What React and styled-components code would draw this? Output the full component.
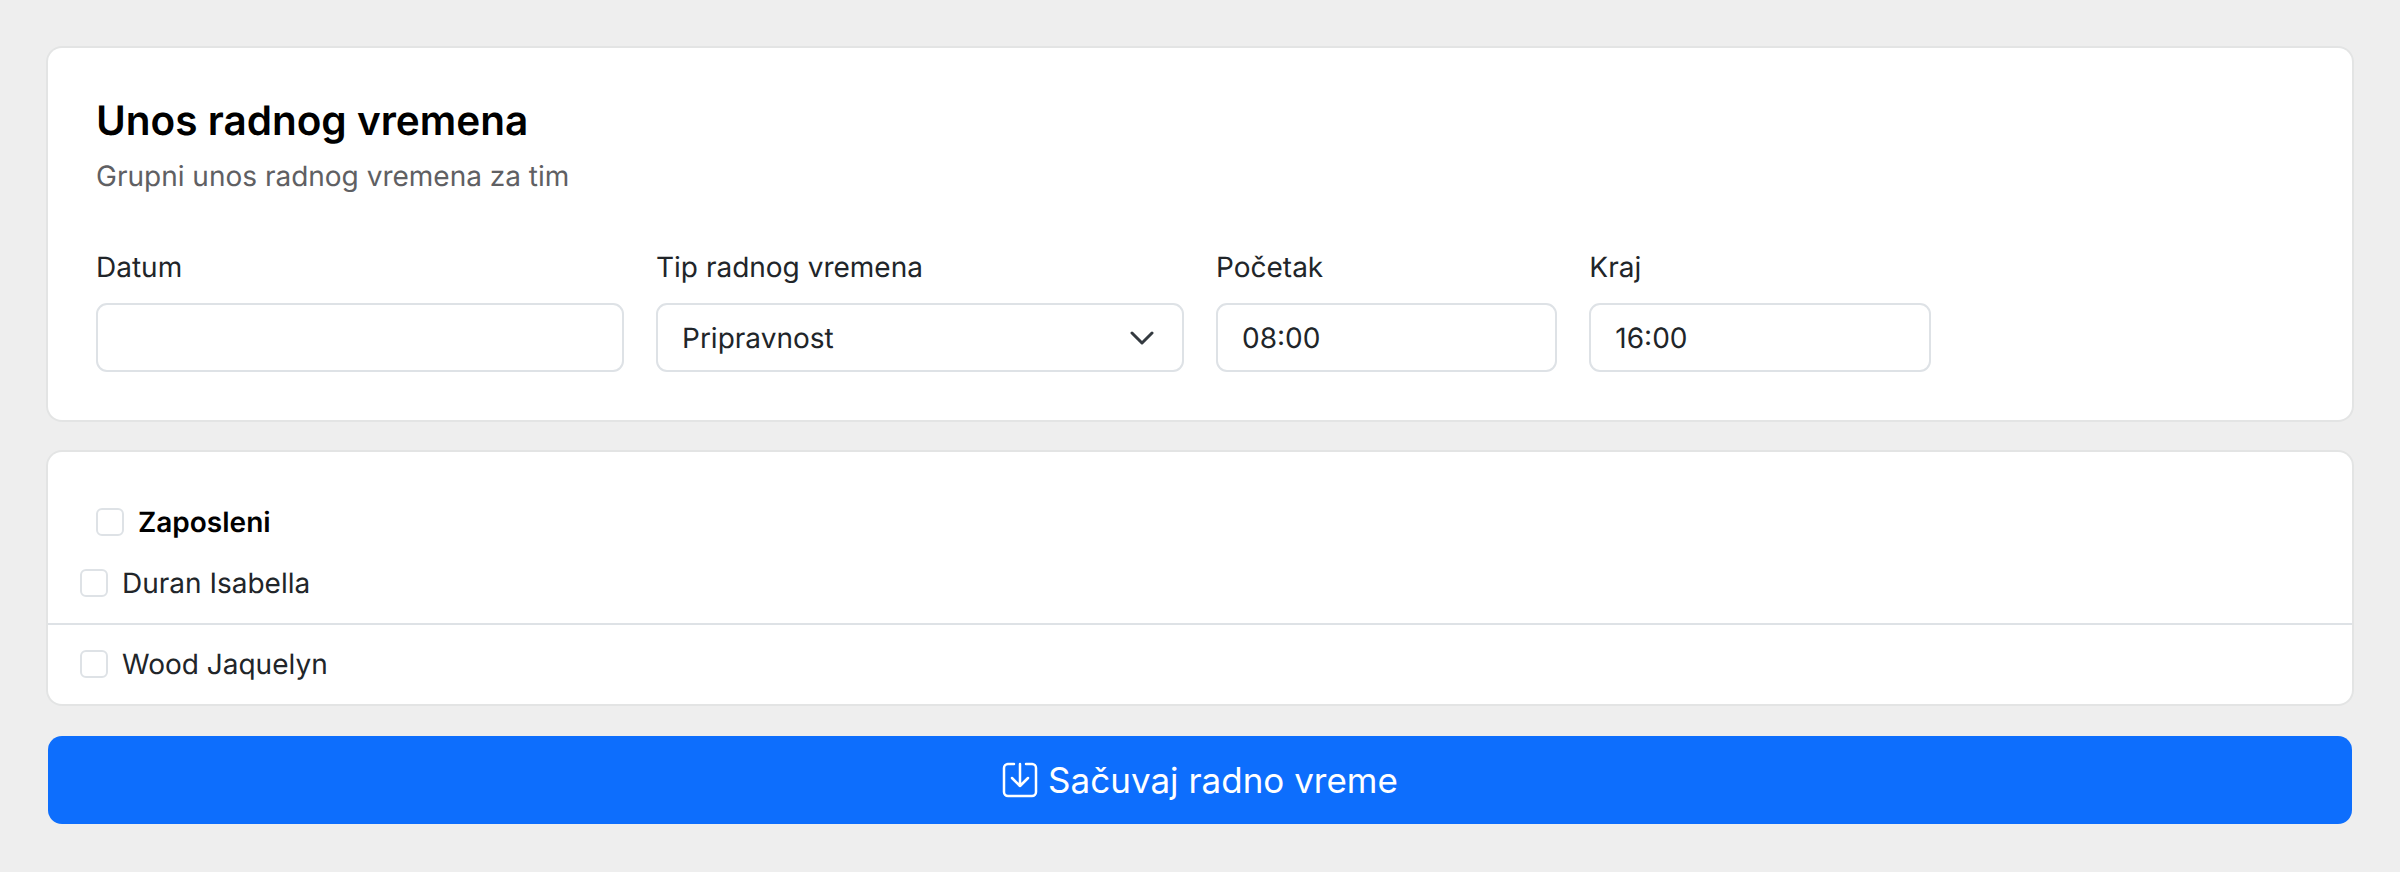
import React from "react";
import styled, { createGlobalStyle } from "styled-components";

const GlobalStyle = createGlobalStyle`
  html, body {
    margin: 0;
    background: #eeeeee;
  }
  body {
    font-family: Inter, "Liberation Sans", sans-serif;
    color: #212529;
    text-rendering: geometricPrecision;
  }
`;

const Page = styled.main`
  display: flex;
  flex-direction: column;
  gap: 32px;
  padding: 48px;
`;

const Card = styled.section`
  background: #fff;
  border-radius: 14px;
  box-shadow: 0 0 0 2px #e3e4e4;
`;

const HeaderCard = styled(Card)`
  padding: 48px;
`;

const Title = styled.h1`
  margin: 0;
  font-size: 40.5px;
  font-weight: 600;
  line-height: 50px;
  color: #000;
`;

const Subtitle = styled.p`
  margin: 12px 0 0;
  font-size: 28px;
  line-height: 36px;
  color: #5f6063;
`;

const FormGrid = styled.div`
  display: grid;
  grid-template-columns: repeat(12, 1fr);
  column-gap: 32px;
  margin-top: 55px;
`;

const Field = styled.label`
  grid-column: span ${({ $span }) => $span};
  display: flex;
  flex-direction: column;
  gap: 18px;
`;

const LabelText = styled.span`
  font-size: 28px;
  line-height: 36px;
`;

const Control = styled.div`
  box-sizing: border-box;
  display: flex;
  align-items: center;
  justify-content: space-between;
  height: 69px;
  padding: 0 24px;
  border: 2px solid #dee2e6;
  border-radius: 11px;
  background: #fff;
  font-size: 28px;
`;

const Chevron = styled.svg`
  width: 24px;
  height: 24px;
  margin-right: 4px;
`;

const ListCard = styled(Card)`
  padding-bottom: 1px;
  overflow: hidden;
`;

const ListHeader = styled.div`
  display: flex;
  align-items: center;
  gap: 14px;
  padding: 56px 0 7px 48px;
  font-size: 28px;
  line-height: 28px;
  font-weight: 600;
  color: #000;
`;

const Row = styled.div`
  box-sizing: border-box;
  display: flex;
  align-items: center;
  gap: 14px;
  height: 80px;
  padding-left: 32px;
  font-size: 28px;
  border-top: ${({ $divided }) => ($divided ? "2px solid #dee2e6" : "none")};
`;

const Box = styled.span`
  box-sizing: border-box;
  flex: none;
  width: 28px;
  height: 28px;
  border: 2px solid #dee2e6;
  border-radius: 6px;
  background: #fff;
`;

const SaveButton = styled.button`
  display: flex;
  align-items: center;
  justify-content: center;
  gap: 10px;
  height: 88px;
  border: 0;
  border-radius: 14px;
  background: #0d6efd;
  color: #fff;
  font-family: inherit;
  font-size: 35px;
`;

const SaveIcon = styled.svg`
  width: 36px;
  height: 36px;
`;

export default function App() {
  return (
    <>
      <GlobalStyle />
      <Page>
        <HeaderCard>
          <Title>Unos radnog vremena</Title>
          <Subtitle>Grupni unos radnog vremena za tim</Subtitle>
          <FormGrid>
            <Field $span={3}>
              <LabelText>Datum</LabelText>
              <Control />
            </Field>
            <Field $span={3}>
              <LabelText>Tip radnog vremena</LabelText>
              <Control>
                Pripravnost
                <Chevron viewBox="0 0 24 24" fill="none" stroke="#343a40" strokeWidth="3" strokeLinecap="round" strokeLinejoin="round">
                  <path d="m2 7 10 10 10-10" />
                </Chevron>
              </Control>
            </Field>
            <Field $span={2}>
              <LabelText>Početak</LabelText>
              <Control>08:00</Control>
            </Field>
            <Field $span={2}>
              <LabelText>Kraj</LabelText>
              <Control>16:00</Control>
            </Field>
          </FormGrid>
        </HeaderCard>
        <ListCard>
          <ListHeader>
            <Box />
            Zaposleni
          </ListHeader>
          <Row>
            <Box />
            Duran Isabella
          </Row>
          <Row $divided>
            <Box />
            Wood Jaquelyn
          </Row>
        </ListCard>
        <SaveButton type="button">
          <SaveIcon viewBox="0 0 36 36" fill="none" stroke="#fff" strokeWidth="2.5" strokeLinecap="round" strokeLinejoin="round">
            <path d="M12 2H6a4 4 0 0 0-4 4v24a4 4 0 0 0 4 4h24a4 4 0 0 0 4-4V6a4 4 0 0 0-4-4h-6" />
            <path d="M18 2v22M10 16l8 8 8-8" />
          </SaveIcon>
          Sačuvaj radno vreme
        </SaveButton>
      </Page>
    </>
  );
}
